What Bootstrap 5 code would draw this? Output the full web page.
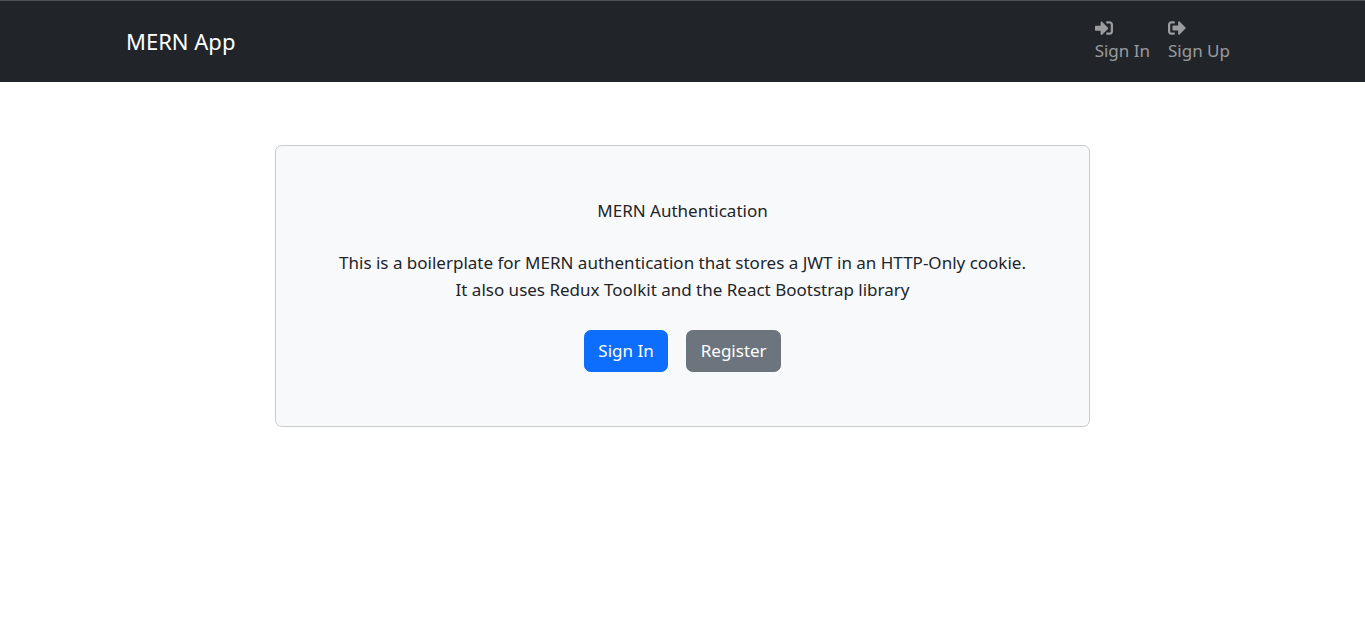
<!DOCTYPE html>
<html lang="en">
<head>
<meta charset="utf-8">
<meta name="viewport" content="width=device-width, initial-scale=1">
<title>MERN App</title>
<link href="https://cdn.jsdelivr.net/npm/bootstrap@5.3.0/dist/css/bootstrap.min.css" rel="stylesheet">
<style>
  html { font-size: 18px; }
  body { font-family: "Noto Sans", "Open Sans", sans-serif; color: #212529; }
  .site-nav { border-top: 1px solid #4d5154; }
  .site-nav .navbar-brand { font-size: 22px; }
  .site-nav .nav-link, .hero-card h1, .hero-card p, .hero-card .btn { font-size: 17px; line-height: 27px; }
  .site-nav .nav-link { color: rgba(255, 255, 255, .55); }
  .site-nav .nav-link svg { display: block; width: 18px; height: 18px; fill: currentColor; }
  .hero-card { border-color: #c8cacc; }
  .hero-card h1 { font-weight: 400; line-height: 22px; }
  .hero-card .btn { line-height: 26px; }
</style>
</head>
<body>
<header>
  <nav class="navbar navbar-expand-lg navbar-dark bg-dark site-nav">
    <div class="container">
      <a class="navbar-brand" href="#">MERN App</a>
      <button class="navbar-toggler" type="button" data-bs-toggle="collapse" data-bs-target="#main-nav" aria-controls="main-nav" aria-expanded="false" aria-label="Toggle navigation"><span class="navbar-toggler-icon"></span></button>
      <div class="collapse navbar-collapse" id="main-nav">
        <div class="navbar-nav ms-auto">
          <a class="nav-link" href="#">
            <svg viewBox="0 0 512 512" aria-hidden="true"><path d="M416 448h-84c-6.6 0-12-5.4-12-12v-40c0-6.6 5.4-12 12-12h84c17.7 0 32-14.3 32-32V160c0-17.7-14.3-32-32-32h-84c-6.6 0-12-5.4-12-12V76c0-6.6 5.4-12 12-12h84c53 0 96 43 96 96v192c0 53-43 96-96 96zm-47-201L201 79c-15-15-41-4.5-41 17v96H24c-13.3 0-24 10.7-24 24v96c0 13.3 10.7 24 24 24h136v96c0 21.5 26 32 41 17l168-168c9.3-9.4 9.3-24.6 0-34z"/></svg>
            Sign In
          </a>
          <a class="nav-link" href="#">
            <svg viewBox="0 0 512 512" aria-hidden="true"><path d="M497 273L329 441c-15 15-41 4.5-41-17v-96H152c-13.3 0-24-10.7-24-24v-96c0-13.3 10.7-24 24-24h136V88c0-21.4 25.9-32 41-17l168 168c9.3 9.4 9.3 24.6 0 34zM192 436v-40c0-6.6-5.4-12-12-12H96c-17.7 0-32-14.3-32-32V160c0-17.7 14.3-32 32-32h84c6.6 0 12-5.4 12-12V76c0-6.6-5.4-12-12-12H96c-53 0-96 43-96 96v192c0 53 43 96 96 96h84c6.6 0 12-5.4 12-12z"/></svg>
            Sign Up
          </a>
        </div>
      </div>
    </div>
  </nav>
</header>
<main class="container my-2">
  <div class="py-5">
    <div class="container d-flex justify-content-center">
      <div class="card hero-card p-5 d-flex flex-column align-items-center bg-light w-75">
        <h1 class="text-center mb-4">MERN Authentication</h1>
        <p class="text-center mb-4">This is a boilerplate for MERN authentication that stores a JWT in an HTTP-Only cookie.<br>It also uses Redux Toolkit and the React Bootstrap library</p>
        <div class="d-flex">
          <button type="button" class="btn btn-primary me-3">Sign In</button>
          <button type="button" class="btn btn-secondary">Register</button>
        </div>
      </div>
    </div>
  </div>
</main>
<script src="https://cdn.jsdelivr.net/npm/bootstrap@5.3.0/dist/js/bootstrap.bundle.min.js"></script>
</body>
</html>
